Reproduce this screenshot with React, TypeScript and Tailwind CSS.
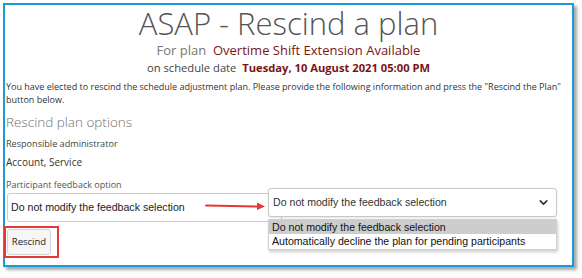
import { ChevronDown } from 'lucide-react';

const segoe = { fontFamily: '"Open Sans", "Noto Sans", sans-serif' };
const arial = { fontFamily: '"Liberation Sans", Arial, sans-serif' };

export default function App() {
  return (
    <div className="w-[582px] h-[278px] bg-white pl-[3px] pt-[3px]" style={segoe}>
      <div className="relative w-[571px] h-[264px] border-2 border-[#1a9ad7] bg-white shadow-[3px_3px_3px_rgba(0,0,0,0.35)]">
        <h1 className="text-center text-[31px] leading-[36px] font-light text-[#555]">
          ASAP - Rescind a plan
        </h1>
        <div className="mt-[1px] text-center text-[13px] leading-[16px] text-[#777]">
          For plan&nbsp; <span className="text-[#7a1414]">Overtime Shift Extension Available</span>
        </div>
        <div className="mt-[2px] text-center text-[11.2px] leading-[16px] text-[#444]">
          on schedule date&nbsp; <span className="font-bold text-[#7a1414]">Tuesday, 10 August 2021 05:00 PM</span>
        </div>
        <p className="mt-[4px] px-[1px] text-[9px] leading-[13px] text-[#333]">
          You have elected to rescind the schedule adjustment plan. Please provide the following information and press the "Rescind the Plan" button below.
        </p>
        <h2 className="mt-[7px] px-[1px] text-[13.5px] leading-[18px] font-light text-[#6f6f6f]">Rescind plan options</h2>
        <div className="mt-[7px] px-[1px] text-[9.1px] leading-[12px] text-[#444]">Responsible administrator</div>
        <div className="mt-[5px] px-[1px] text-[10px] leading-[14px] text-[#333]">Account, Service</div>
        <div className="mt-[10px] px-[1px] text-[9px] leading-[12px] text-[#555]">Participant feedback option</div>
        <div
          className="mt-[2px] ml-[2px] flex h-[29px] w-[275px] items-center rounded-[3px] border border-[#ccc] pl-[3px] text-[10.6px] text-[#222]"
          style={arial}
        >
          Do not modify the feedback selection
        </div>
        <div className="mt-[4px] -ml-[1px] w-[55px] border-2 border-[#e53935] p-[1px]">
          <button className="flex h-[26px] w-[44px] items-center justify-center rounded-[3px] border border-[#d4d4d4] bg-[#f6f6f6] text-[9.5px] text-[#222]">
            Rescind
          </button>
        </div>

        {/* annotation: opened select */}
        <svg className="absolute left-[199px] top-[196px]" width="64" height="10" viewBox="0 0 64 10">
          <line x1="2" y1="4.5" x2="55" y2="5.5" stroke="#e53935" strokeWidth="2" strokeLinecap="round" />
          <path d="M53 1.5 L61 5.5 L53 9 Z" fill="#e53935" />
        </svg>
        <div className="absolute left-[263px] top-[183px] w-[289px]" style={arial}>
          <div className="flex h-[29px] items-center justify-between rounded-[3px] border border-[#c8c8c8] bg-white pl-[4px] pr-[6px] text-[10.6px] text-[#333] shadow-[0_1px_2px_rgba(0,0,0,0.1)]">
            Do not modify the feedback selection
            <ChevronDown size={13} strokeWidth={3} className="text-[#333]" />
          </div>
          <div className="mt-[2px] border border-[#cfcfcf] bg-white text-[10.6px] leading-[14px] text-[#111] shadow-[1px_2px_3px_rgba(0,0,0,0.2)]">
            <div className="bg-[#cdcdcd] pl-[3px]">Do not modify the feedback selection</div>
            <div className="pl-[3px] pb-[1px]">Automatically decline the plan for pending participants</div>
          </div>
        </div>
      </div>
    </div>
  );
}
